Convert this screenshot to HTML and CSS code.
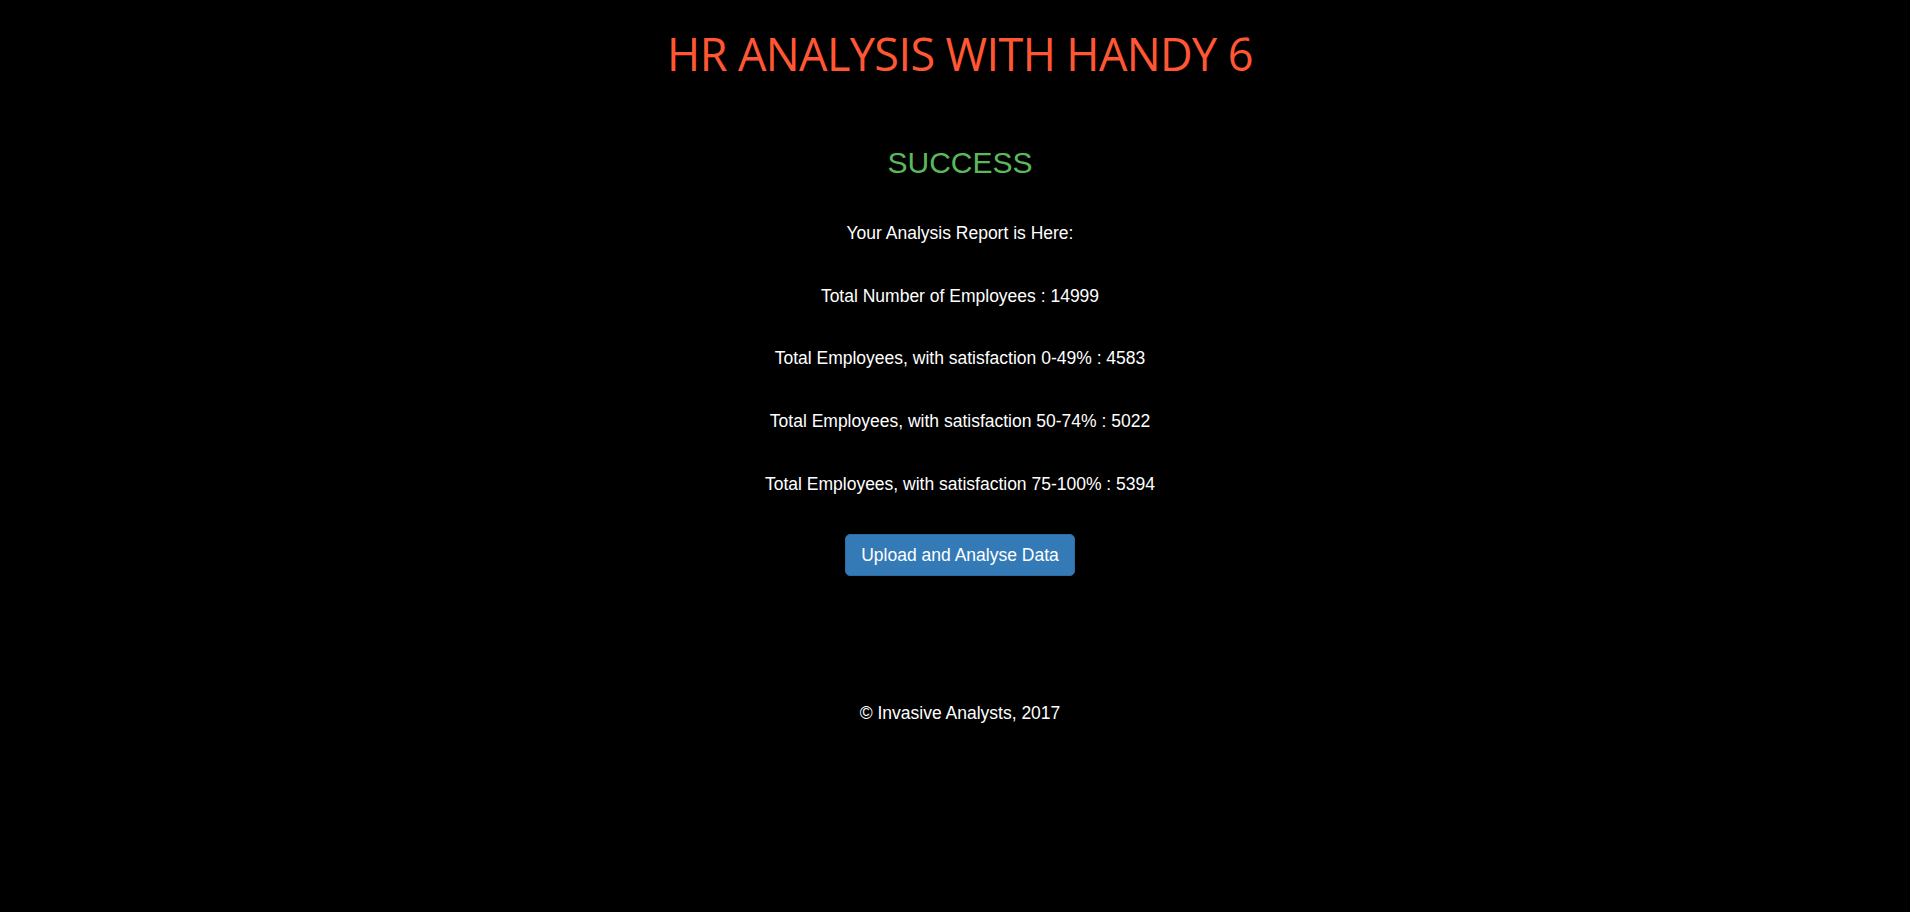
FILE: index.html
```html
<!DOCTYPE html>
<html lang="en">
<head>
<meta charset="utf-8">
<title>HR Analysis with Handy 6</title>
<link rel="stylesheet" href="styles.css">
</head>
<body>
<div class="page">
  <h1 class="title">HR ANALYSIS WITH HANDY 6</h1>
  <h3 class="status">SUCCESS</h3>
  <div class="report">
    <p>Your Analysis Report is Here:</p>
    <p>Total Number of Employees : 14999</p>
    <p>Total Employees, with satisfaction 0-49% : 4583</p>
    <p>Total Employees, with satisfaction 50-74% : 5022</p>
    <p>Total Employees, with satisfaction 75-100% : 5394</p>
    <a class="btn" href="#">Upload and Analyse Data</a>
  </div>
  <footer class="footer">© Invasive Analysts, 2017</footer>
</div>
</body>
</html>
```
FILE: styles.css
```css
html, body {
  margin: 0;
  padding: 0;
  background: #000;
}
body {
  font-family: "Liberation Sans", Arial, Helvetica, sans-serif;
  color: #fff;
  font-size: 17.5px;
  line-height: 25px;
}
.page {
  display: flex;
  flex-direction: column;
  align-items: center;
  text-align: center;
  padding-left: 10px;
}
.title {
  margin: 29px 0 0;
  font-family: "Open Sans", "Noto Sans", sans-serif;
  font-weight: 400;
  font-size: 45px;
  line-height: 50px;
  letter-spacing: -0.6px;
  color: #ff5733;
}
.status {
  margin: 67px 0 0;
  font-weight: 400;
  font-size: 30px;
  line-height: 33px;
  color: #5cb85c;
}
.report {
  margin-top: 42px;
  display: flex;
  flex-direction: column;
  align-items: center;
  gap: 37.7px;
}
.report p {
  margin: 0;
}
.btn {
  display: inline-block;
  padding: 7.5px 15px;
  border: 1px solid #2e6da4;
  border-radius: 5px;
  background: #337ab7;
  color: #fff;
  text-decoration: none;
  line-height: 25px;
}
.footer {
  margin-top: 125px;
}
```
